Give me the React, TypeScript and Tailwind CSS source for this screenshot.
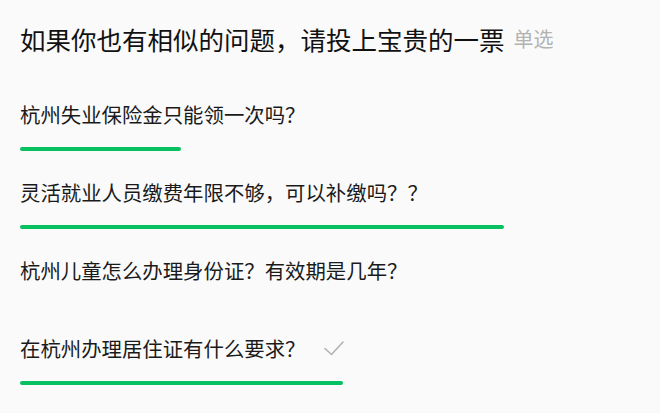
import React from "react";

const items = [
  { text: "杭州失业保险金只能领一次吗？", bar: "w-[161px]", checked: false },
  { text: "灵活就业人员缴费年限不够，可以补缴吗？？", bar: "w-[484px]", checked: false },
  { text: "杭州儿童怎么办理身份证？有效期是几年？", bar: "w-0", checked: false },
  { text: "在杭州办理居住证有什么要求？", bar: "w-[323px]", checked: true },
];

export default function App() {
  return (
    <div
      className="w-[660px] h-[413px] bg-[#fafafa] px-5 overflow-hidden"
      style={{ fontFamily: '"Noto Sans CJK SC", "Noto Sans", sans-serif' }}
    >
      <div className="pt-[26px] flex items-center leading-[26px]">
        <span className="text-[25.5px] text-[#111111]">如果你也有相似的问题，请投上宝贵的一票</span>
        <span className="ml-[9px] text-[20px] text-[#b2b2b2]">单选</span>
      </div>
      <div className="mt-[47px] flex flex-col">
        {items.map((it, i) => (
          <div key={i} className="flex flex-col">
            <div className="flex items-center h-[30px]">
              <span className="text-[20.4px] leading-[30px] text-[#1a1a1a]">{it.text}</span>
              {it.checked && (
                <svg className="ml-[19px]" width="20" height="16" viewBox="0 0 20 16" fill="none">
                  <path d="M1 8.5 L7.5 14.5 L19 2" stroke="#b2b2b2" strokeWidth="1.6" strokeLinecap="round" strokeLinejoin="round" />
                </svg>
              )}
            </div>
            <div className={`mt-[18px] h-[4px] rounded-full bg-[#07c160] ${it.bar}`} />
            <div className="h-[26px]" />
          </div>
        ))}
      </div>
    </div>
  );
}
